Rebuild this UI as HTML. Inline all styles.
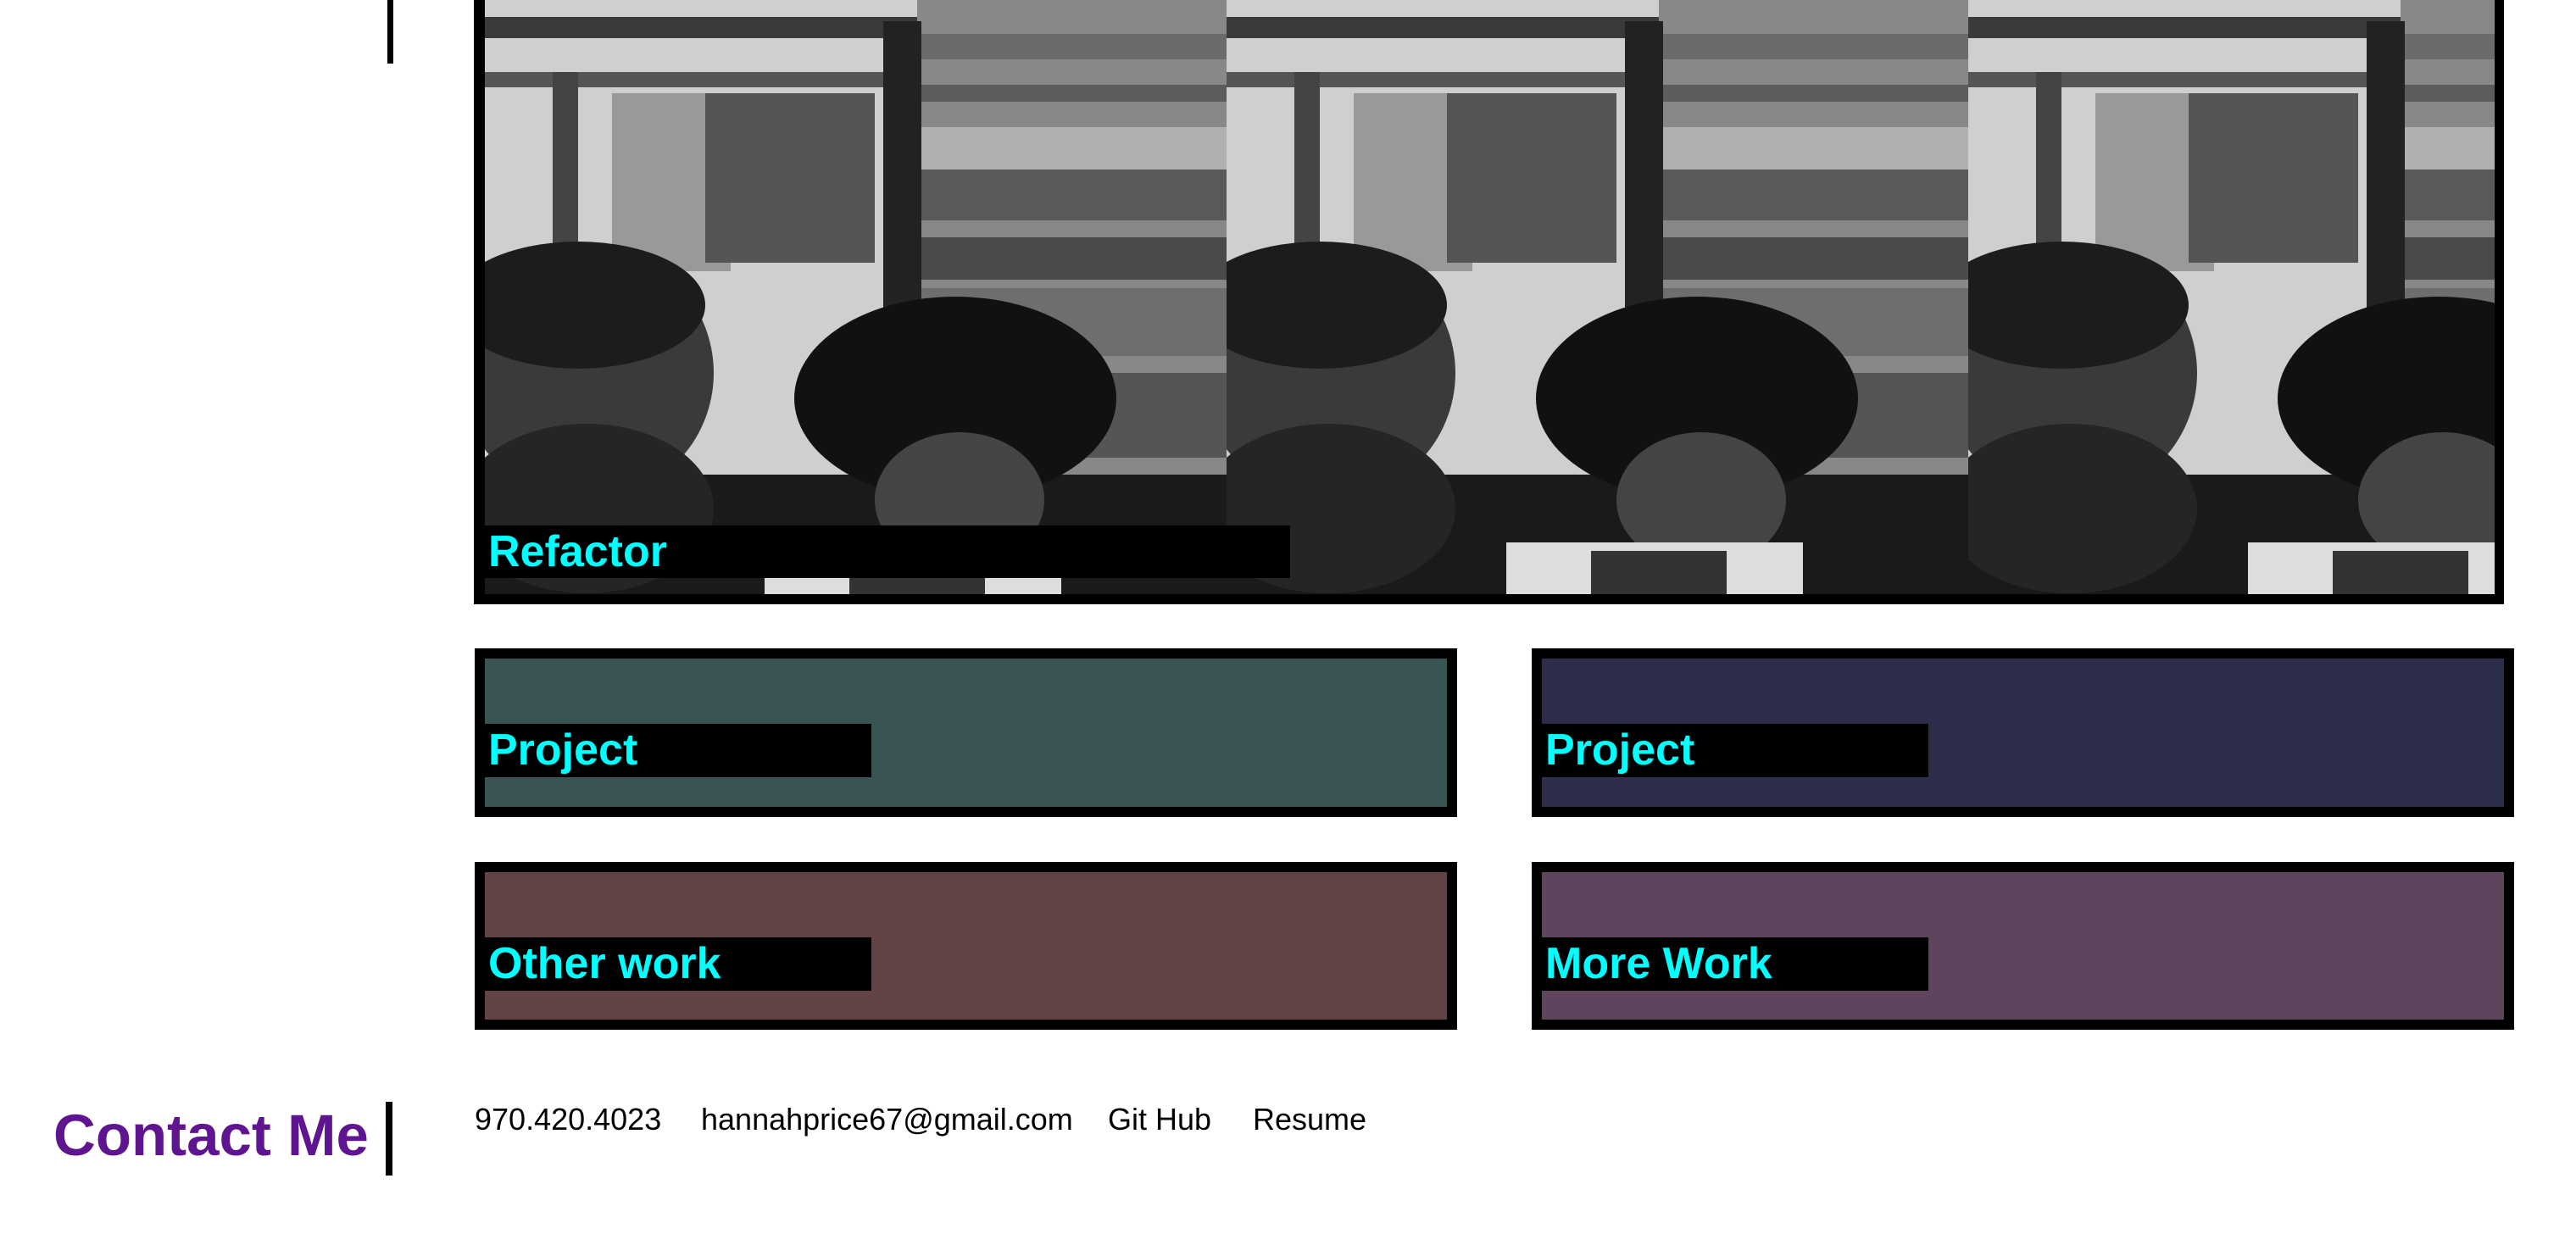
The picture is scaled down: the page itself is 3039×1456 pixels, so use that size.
<!DOCTYPE html>
<html><head><meta charset="utf-8"><style>
html,body{margin:0;padding:0;background:#fff;}
body{width:3039px;height:1456px;position:relative;overflow:hidden;font-family:"Liberation Sans",Arial,sans-serif;}
.abs{position:absolute;}
.box{position:absolute;background:#000;}
.in{position:absolute;left:12px;top:12px;right:12px;bottom:12px;}
.lab{position:absolute;left:0;width:456px;top:77px;height:63px;background:#000;color:#00ffff;font-weight:bold;font-size:52px;line-height:63px;padding-left:4px;box-sizing:border-box;white-space:nowrap;}
.links span{position:absolute;top:1300px;font-size:36px;color:#000;white-space:nowrap;}
</style></head><body>
<div class="abs" style="left:457px;top:0;width:7px;height:75px;background:#000"></div>

<div class="box" style="left:559px;top:-20px;width:2395px;height:733px;">
  <svg class="abs" style="left:13px;top:0" width="2371" height="721" viewBox="0 0 2371 721">
    <defs>
      <pattern id="t" x="0" y="20" width="875" height="701" patternUnits="userSpaceOnUse">
        <rect width="875" height="701" fill="#888"/>
        <rect x="0" y="0" width="510" height="701" fill="#cfcfcf"/>
        <rect x="0" y="20" width="510" height="25" fill="#3a3a3a"/>
        <rect x="0" y="85" width="470" height="18" fill="#555"/>
        <rect x="80" y="85" width="30" height="500" fill="#444"/>
        <rect x="150" y="110" width="140" height="210" fill="#999"/>
        <rect x="260" y="110" width="200" height="200" fill="#555"/>
        <rect x="470" y="25" width="45" height="560" fill="#222"/>
        <rect x="515" y="40" width="360" height="30" fill="#6b6b6b"/>
        <rect x="515" y="100" width="360" height="20" fill="#5c5c5c"/>
        <rect x="515" y="150" width="360" height="50" fill="#b0b0b0"/>
        <rect x="515" y="200" width="360" height="60" fill="#5a5a5a"/>
        <rect x="515" y="280" width="360" height="50" fill="#4a4a4a"/>
        <rect x="515" y="340" width="360" height="80" fill="#6e6e6e"/>
        <rect x="515" y="440" width="360" height="100" fill="#555"/>
        <rect x="0" y="560" width="875" height="141" fill="#1a1a1a"/>
        <ellipse cx="120" cy="440" rx="150" ry="150" fill="#3a3a3a"/>
        <ellipse cx="110" cy="360" rx="150" ry="75" fill="#1c1c1c"/>
        <ellipse cx="120" cy="600" rx="150" ry="100" fill="#252525"/>
        <ellipse cx="555" cy="470" rx="190" ry="120" fill="#111"/>
        <ellipse cx="560" cy="590" rx="100" ry="80" fill="#444"/>
        <rect x="330" y="640" width="350" height="61" fill="#ddd"/>
        <rect x="430" y="650" width="160" height="51" fill="#333"/>
      </pattern>
    </defs>
    <rect width="2371" height="721" fill="url(#t)"/>
  </svg>
  <div class="lab" style="left:13px;top:640px;width:950px;height:62px;line-height:62px;">Refactor</div>
</div>

<div class="box" style="left:560px;top:765px;width:1159px;height:199px;"><div class="in" style="background:#3a5353"><div class="lab">Project</div></div></div>
<div class="box" style="left:1807px;top:765px;width:1159px;height:199px;"><div class="in" style="background:#2d2d4c"><div class="lab">Project</div></div></div>
<div class="box" style="left:560px;top:1017px;width:1159px;height:198px;"><div class="in" style="background:#634446"><div class="lab">Other work</div></div></div>
<div class="box" style="left:1807px;top:1017px;width:1159px;height:198px;"><div class="in" style="background:#5e445c"><div class="lab">More Work</div></div></div>

<div class="abs" style="left:63px;top:1300px;font-size:69px;font-weight:bold;color:#5f158f;line-height:80px;white-space:nowrap;">Contact Me</div>
<div class="abs" style="left:455px;top:1300px;width:8px;height:87px;background:#000"></div>
<div class="links">
  <span style="left:560px">970.420.4023</span>
  <span style="left:827px">hannahprice67@gmail.com</span>
  <span style="left:1307px">Git Hub</span>
  <span style="left:1478px">Resume</span>
</div>
</body></html>
